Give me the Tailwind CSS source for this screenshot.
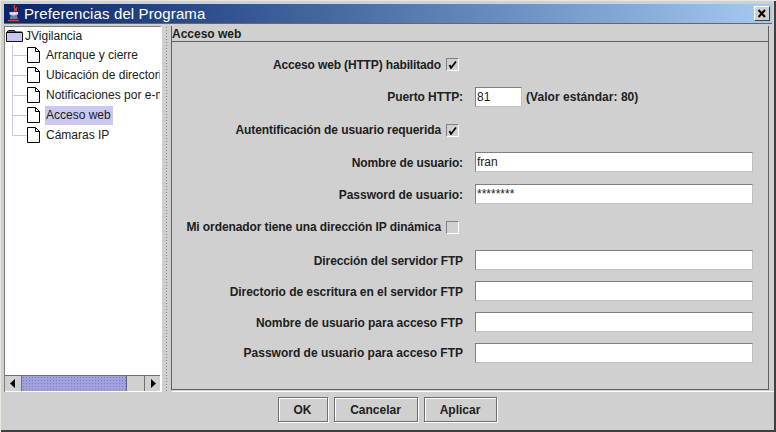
<!DOCTYPE html>
<html><head><meta charset="utf-8">
<script src="https://cdn.jsdelivr.net/npm/@tailwindcss/browser@4"></script>
</head>
<body class="m-0 overflow-hidden">
<div class="w-[776px] h-[432px] flex flex-col bg-[#d0d0d0] border-t-[1px] border-l-[1px] border-t-[#e8e8e0] border-l-[#e8e8e0] font-['Liberation_Sans',sans-serif] text-[12px] text-black relative">
  <div class="absolute right-0 top-0 bottom-0 w-[2px] bg-[#404040]"></div>
  <div class="absolute left-0 right-0 bottom-0 h-[2px] bg-[#404040]"></div>
  <div class="h-[3px] shrink-0"></div>
  <!-- title -->
  <div class="ml-[3px] mr-[4px] h-[20px] flex items-center bg-gradient-to-r from-[#0a246a] to-[#a6caf0] border-b border-b-[#606870] shrink-0">
    <svg class="ml-[3px] shrink-0" width="14" height="17" viewBox="0 0 14 17"><path d="M8 0c-3 2.500 2 3.500-1 6.500M10 2.500c-2 1 0 2-1 4" fill="none" stroke="#f04020" stroke-width="1.300"/><path d="M3 7.500h7.500v1.500c0 .7-7.500 .7-7.500 0zM3.500 11h6.500M3 13h7.500" stroke="#d0d0f0" stroke-width="1.200" fill="#e0e0f0"/><path d="M1 15.500h11" stroke="#f04020" stroke-width="1.400"/></svg>
    <span class="ml-[3px] text-[15px] leading-[20px] text-white whitespace-nowrap tracking-[0.12px]">Preferencias del Programa</span>
    <div class="ml-auto mr-[2px] w-[16px] h-[15px] bg-[#d4d0c8] border border-t-white border-l-white border-r-[#404040] border-b-[#404040] flex items-center justify-center">
      <svg width="10" height="9" viewBox="0 0 10 9"><path d="M1.500 1l6.500 7M8 1L1.500 8" stroke="#000" stroke-width="2"/></svg>
    </div>
  </div>
  <div class="h-[2px] shrink-0"></div>
  <!-- main -->
  <div class="flex h-[367px] ml-[3px] shrink-0">
    <!-- left -->
    <div class="w-[158px] h-[366px] flex flex-col bg-white border-t border-l border-t-[#808080] border-l-[#808080] border-r-[2px] border-r-white relative overflow-hidden shrink-0">
      <div class="flex-1 relative min-h-0 overflow-hidden">
        <div class="flex items-center h-[18px] pb-px">
          <svg class="ml-[1px] shrink-0" width="17" height="13" viewBox="0 0 17 13"><path d="M.5 3.500h16v9H.5zM.5 3.500l2-2h6l1 2" fill="#c8c8ec" stroke="#101020"/><path d="M1 2.500h15v1H1z" fill="#000"/></svg>
          <span class="ml-[2px] text-[#202020]">JVigilancia</span>
        </div>
        <div class="absolute left-[7px] top-[18px] w-px h-[91px] bg-[#c8c8e0]"></div>
        <div class="flex items-center h-[20px] pl-[7px]"><span class="w-[15px] h-px bg-[#c8c8e0] shrink-0"></span><svg class="shrink-0" width="13" height="16" viewBox="0 0 13 16"><path d="M.5.500h8l4 4v11H.5z" fill="#fff" stroke="#000"/><path d="M8.500.500v4h4" fill="none" stroke="#000"/></svg><span class="ml-[6px] whitespace-nowrap text-[#202020]">Arranque y cierre</span></div>
        <div class="flex items-center h-[20px] pl-[7px]"><span class="w-[15px] h-px bg-[#c8c8e0] shrink-0"></span><svg class="shrink-0" width="13" height="16" viewBox="0 0 13 16"><path d="M.5.500h8l4 4v11H.5z" fill="#fff" stroke="#000"/><path d="M8.500.500v4h4" fill="none" stroke="#000"/></svg><span class="ml-[6px] whitespace-nowrap text-[#202020]">Ubicación de directorios</span></div>
        <div class="flex items-center h-[20px] pl-[7px]"><span class="w-[15px] h-px bg-[#c8c8e0] shrink-0"></span><svg class="shrink-0" width="13" height="16" viewBox="0 0 13 16"><path d="M.5.500h8l4 4v11H.5z" fill="#fff" stroke="#000"/><path d="M8.500.500v4h4" fill="none" stroke="#000"/></svg><span class="ml-[6px] whitespace-nowrap text-[#202020]">Notificaciones por e-mail</span></div>
        <div class="flex items-center h-[20px] pl-[7px]"><span class="w-[15px] h-px bg-[#c8c8e0] shrink-0"></span><svg class="shrink-0" width="13" height="16" viewBox="0 0 13 16"><path d="M.5.500h8l4 4v11H.5z" fill="#fff" stroke="#000"/><path d="M8.500.500v4h4" fill="none" stroke="#000"/></svg><span class="ml-[5px] pl-px pr-[2px] h-[19px] leading-[19px] whitespace-nowrap bg-[#c8c8f0] text-[#202020]">Acceso web</span></div>
        <div class="flex items-center h-[20px] pl-[7px]"><span class="w-[15px] h-px bg-[#c8c8e0] shrink-0"></span><svg class="shrink-0" width="13" height="16" viewBox="0 0 13 16"><path d="M.5.500h8l4 4v11H.5z" fill="#fff" stroke="#000"/><path d="M8.500.500v4h4" fill="none" stroke="#000"/></svg><span class="ml-[6px] whitespace-nowrap text-[#202020]">Cámaras IP</span></div>
      </div>
      <!-- scrollbar -->
      <div class="h-[16px] flex bg-[#d0d0d0] border-t border-t-[#707070] shrink-0 mb-[1px]">
        <div class="w-[17px] flex items-center justify-center border-r border-r-[#707070]"><svg width="6" height="9" viewBox="0 0 6 9"><path d="M5 0v9L0 4.500z" fill="#000"/></svg></div>
        <div class="w-[105px] bg-[#a0a0dc] border-r border-r-[#606090] bg-[radial-gradient(#8080c0_1px,transparent_1px)] bg-[length:3px_3px]"></div>
        <div class="flex-1 border-r border-r-[#707070]"></div>
        <div class="w-[15px] flex items-center justify-center"><svg width="6" height="9" viewBox="0 0 6 9"><path d="M1 0v9l5-4.500z" fill="#000"/></svg></div>
      </div>
    </div>
    <!-- divider -->
    <div class="w-[9px] h-[366px] bg-[radial-gradient(#808080_0.8px,transparent_1px)] bg-[length:3px_3px] bg-[#d0d0d0] border-x-[3px] border-x-[#d0d0d0] shrink-0"></div>
    <!-- right -->
    <div class="w-[598px] h-[364px] flex flex-col border-l border-l-[#606060] border-r border-r-[#606060] border-b border-b-[#606060] shrink-0">
      <div class="h-[16px] shrink-0 flex items-center font-bold text-[#202020] leading-[15px] border-b border-b-[#606060] pt-[2px]">Acceso web</div>
      <div class="flex items-center h-[20px] mt-[12px]"><b class="w-[269px] pt-px text-right text-[#202020] tracking-[-0.14px]">Acceso web (HTTP) habilitado</b><span class="w-[13px] h-[13px] ml-[5px] flex items-center justify-center border border-t-[#808080] border-l-[#808080] border-r-white border-b-white"><svg width="9" height="9" viewBox="0 0 9 9"><path d="M1.500 5l1.500 3L8 1.500" fill="none" stroke="#000" stroke-width="1.700"/></svg></span></div>
      <div class="flex items-center h-[20px] mt-[13px]"><b class="w-[291px] text-right text-[#202020] tracking-[-0.08px]">Puerto HTTP:</b><span class="w-[47px] h-[20px] ml-[12px] bg-white border border-t-[#808080] border-l-[#808080] border-r-[#c0c0c0] border-b-[#c0c0c0] pl-[1px] leading-[18px] text-[#202020]">81</span><b class="ml-[4px] text-[#202020] tracking-[0.05px]">(Valor estándar: 80)</b></div>
      <div class="flex items-center h-[20px] mt-[13px]"><b class="w-[269px] text-right text-[#202020] tracking-[-0.09px]">Autentificación de usuario requerida</b><span class="w-[13px] h-[13px] ml-[5px] flex items-center justify-center border border-t-[#808080] border-l-[#808080] border-r-white border-b-white"><svg width="9" height="9" viewBox="0 0 9 9"><path d="M1.500 5l1.500 3L8 1.500" fill="none" stroke="#000" stroke-width="1.700"/></svg></span></div>
      <div class="flex items-center h-[20px] mt-[12px]"><b class="w-[291px] pt-px text-right text-[#202020] tracking-[-0.11px]">Nombre de usuario:</b><span class="w-[278px] h-[20px] ml-[12px] bg-white border border-t-[#808080] border-l-[#808080] border-r-[#c0c0c0] border-b-[#c0c0c0] pl-[1px] leading-[19px] text-[#202020]">fran</span></div>
      <div class="flex items-center h-[20px] mt-[12px]"><b class="w-[291px] pt-px text-right text-[#202020] tracking-[-0.02px]">Password de usuario:</b><span class="w-[278px] h-[20px] ml-[12px] bg-white border border-t-[#808080] border-l-[#808080] border-r-[#c0c0c0] border-b-[#c0c0c0] pl-[1px] leading-[19px] text-[#202020]">********</span></div>
      <div class="flex items-center h-[20px] mt-[13px]"><b class="w-[269px] text-right text-[#202020] whitespace-nowrap tracking-[-0.09px]">Mi ordenador tiene una dirección IP dinámica</b><span class="w-[13px] h-[13px] ml-[5px] border border-t-[#808080] border-l-[#808080] border-r-white border-b-white"></span></div>
      <div class="flex items-center h-[20px] mt-[13px]"><b class="w-[291px] pt-px text-right text-[#202020] tracking-[-0.11px]">Dirección del servidor FTP</b><span class="w-[278px] h-[20px] ml-[12px] bg-white border border-t-[#808080] border-l-[#808080] border-r-[#c0c0c0] border-b-[#c0c0c0]"></span></div>
      <div class="flex items-center h-[20px] mt-[11px]"><b class="w-[291px] pt-px text-right text-[#202020] tracking-[-0.05px]">Directorio de escritura en el servidor FTP</b><span class="w-[278px] h-[20px] ml-[12px] bg-white border border-t-[#808080] border-l-[#808080] border-r-[#c0c0c0] border-b-[#c0c0c0]"></span></div>
      <div class="flex items-center h-[20px] mt-[11px]"><b class="w-[291px] pt-px text-right text-[#202020] tracking-[-0.03px]">Nombre de usuario para acceso FTP</b><span class="w-[278px] h-[20px] ml-[12px] bg-white border border-t-[#808080] border-l-[#808080] border-r-[#c0c0c0] border-b-[#c0c0c0]"></span></div>
      <div class="flex items-center h-[20px] mt-[11px]"><b class="w-[291px] text-right text-[#202020]">Password de usuario para acceso FTP</b><span class="w-[278px] h-[20px] ml-[12px] bg-white border border-t-[#808080] border-l-[#808080] border-r-[#c0c0c0] border-b-[#c0c0c0]"></span></div>
    </div>
  </div>
  <div class="h-px w-[603px] ml-[171px] bg-white -mt-[2px] shrink-0"></div>
  <!-- buttons -->
  <div class="flex justify-center gap-[6px] mt-[5px] pr-[3px]">
    <span class="w-[50px] h-[25px] flex items-center justify-center font-bold text-[#202020] border border-[#707070] shadow-[inset_1px_1px_0_#fff,1px_1px_0_#fff]">OK</span>
    <span class="w-[84px] h-[25px] flex items-center justify-center font-bold text-[#202020] border border-[#707070] shadow-[inset_1px_1px_0_#fff,1px_1px_0_#fff]">Cancelar</span>
    <span class="w-[73px] h-[25px] flex items-center justify-center font-bold text-[#202020] border border-[#707070] shadow-[inset_1px_1px_0_#fff,1px_1px_0_#fff]">Aplicar</span>
  </div>
</div>
</body></html>
